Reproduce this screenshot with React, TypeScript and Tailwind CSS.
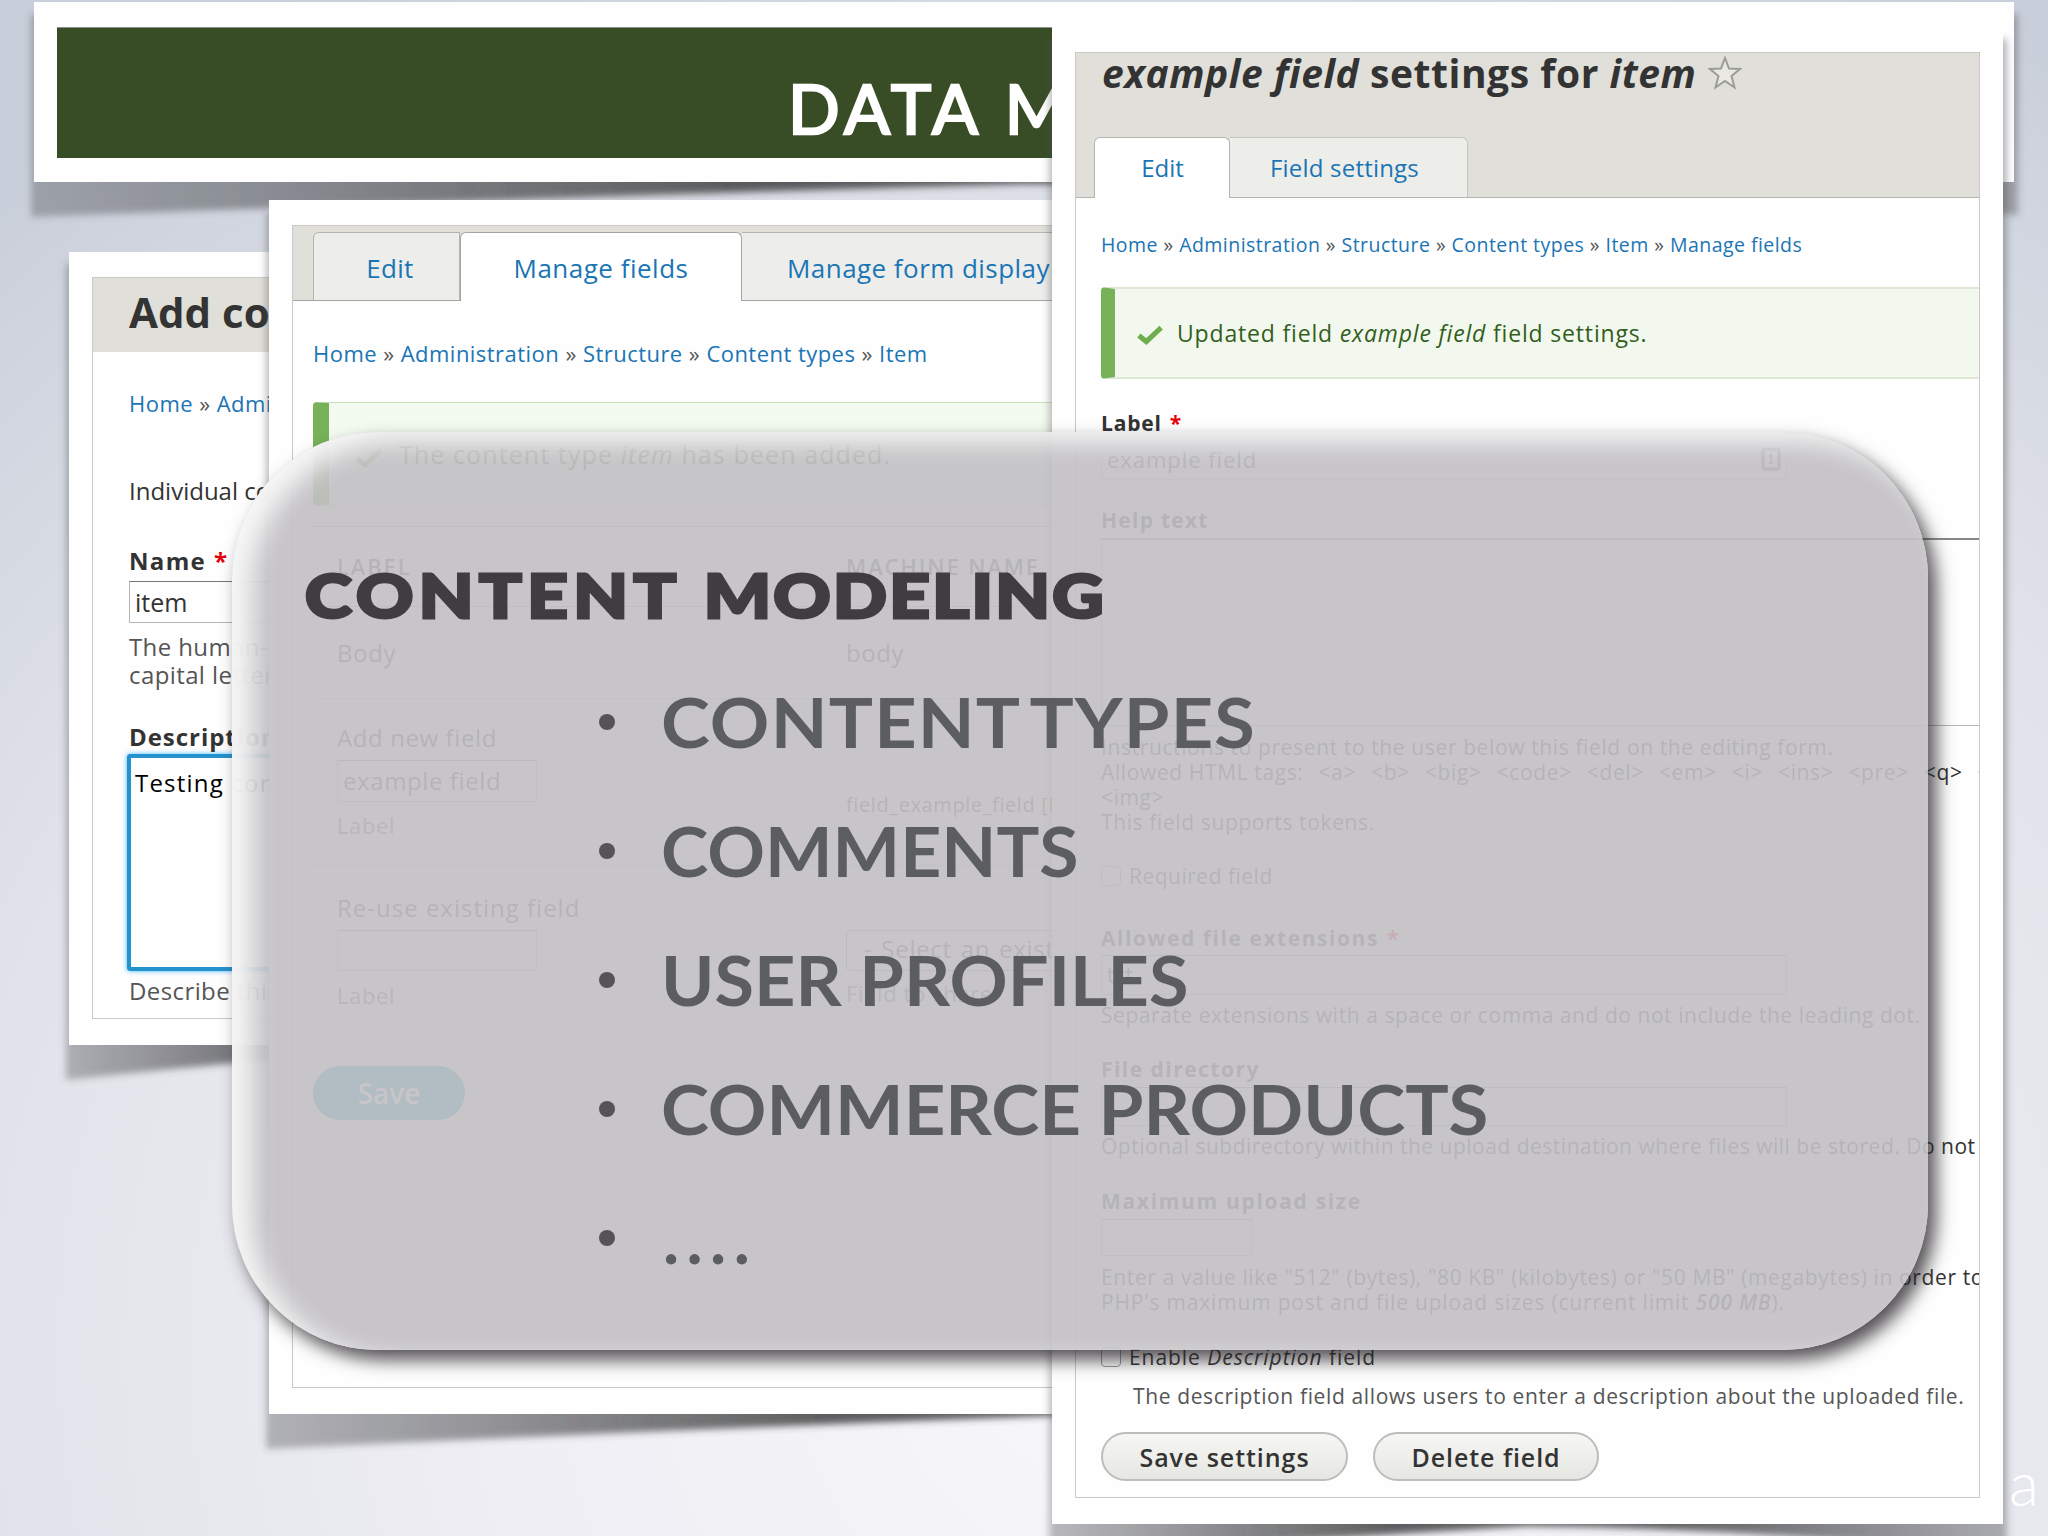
import { ReactNode } from "react";
import { clsx } from "clsx";

interface SheetProps {
    className?: string;
    width: number;
    height: number;
    children: ReactNode;
}

interface CrumbsProps {
    items: string[];
    className?: string;
}

// curled paper shadow that sits under every sheet
const CurlShadow = ({ width, height }: { width: number; height: number }) => {
    const id = `curl-${width}-${height}`;

    return (
        <svg
            className="absolute -left-5 -top-5 -z-10 overflow-visible"
            width={width + 40}
            height={height + 80}
        >
            <defs>
                <linearGradient id={id} x1="0" x2="1" y1="0" y2="0">
                    <stop offset="0" stopColor="#4a4c50" stopOpacity="0.36" />
                    <stop offset="0.35" stopColor="#3a3a3c" stopOpacity="0.8" />
                    <stop offset="0.65" stopColor="#3a3a3c" stopOpacity="0.8" />
                    <stop offset="1" stopColor="#4a4c50" stopOpacity="0.4" />
                </linearGradient>
                <filter id={`${id}-blur`} x="-5%" y="-5%" width="110%" height="115%">
                    <feGaussianBlur stdDeviation="3.5" />
                </filter>
            </defs>
            <path
                d={`M17 32 H${width + 24} V${height + 53} Q${width * 0.75 + 20} ${height + 24} ${width / 2 + 20} ${height + 22} Q${width * 0.25 + 20} ${height + 36} 17 ${height + 55} Z`}
                fill={`url(#${id})`}
                filter={`url(#${id}-blur)`}
            />
        </svg>
    );
};

const Sheet = ({ className, width, height, children }: SheetProps) => (
    <section className={clsx("absolute isolate", className)}>
        <CurlShadow width={width} height={height} />
        <div className="h-full w-full bg-[#fefefe] px-[23px] py-[25px]">{children}</div>
    </section>
);

const Crumbs = ({ items, className }: CrumbsProps) => (
    <nav className={clsx("whitespace-nowrap tracking-[0.46px] text-[#1a75b5]", className)}>
        {items.map((item, i) => (
            <span key={item}>
                {i > 0 && <span className="text-[#555]"> » </span>}
                {item}
            </span>
        ))}
    </nav>
);

const Check = ({ className }: { className: string }) => (
    <svg viewBox="0 0 28 20" className={className} fill="none" stroke="#6fae4f" strokeWidth="5.5">
        <path d="M2 10.5 L10 17 L26 2" />
    </svg>
);

const Required = () => <span className="ml-2 text-red-600">*</span>;

const AddTypeSheet = () => (
    <Sheet className="left-[69px] top-[252px] h-[793px] w-[700px]" width={700} height={793}>
        <div className="h-[742px] overflow-hidden whitespace-nowrap border border-[#c9c9c9] text-[24px] leading-[28px] text-[#333]">
            <header className="h-[74px] bg-[#e0dfd9] pl-9 pt-[13px]">
                <h2 className="text-[42px] font-bold leading-[42px]">Add content type</h2>
            </header>
            <div className="pl-9">
                <Crumbs className="mt-[37px] text-[22px]" items={["Home", "Administration"]} />
                <p className="mt-[60px]">Individual content</p>
                <p className="mt-[42px] font-bold tracking-[0.055em]">Name<Required /></p>
                <div className="mt-[6px] h-[42px] border border-[#b5b5b5] border-t-[#777] pl-[5px] text-[25px] leading-[40px]">item</div>
                <p className="mt-[10px] tracking-[0.4px] text-[#555]">The human-readable<br />capital letters</p>
                <p className="mt-[34px] font-bold tracking-[0.04em]">Description</p>
                <div className="-ml-[2px] mt-[3px] h-[217px] rounded-[3px] border-4 border-[#2492cc] pl-[4px] pt-[11px] tracking-[0.05em] text-black shadow-[0_0_5px_#40b6ff]">Testing content</div>
                <p className="mt-[6px] tracking-[0.4px] text-[#555]">Describe this</p>
            </div>
        </div>
    </Sheet>
);

const ManageFieldsSheet = () => (
    <Sheet className="left-[269px] top-[200px] h-[1214px] w-[1560px]" width={1560} height={1214}>
        <div className="h-[1163px] overflow-hidden whitespace-nowrap border border-[#c9c9c9] text-[24px] leading-[28px] text-[#333]">
            <header className="flex h-[75px] items-end border-b border-[#a6a6a0] bg-[#e0dfd9] pl-[20px] text-[26px] font-medium text-[#1a75b5]">
                <span className="flex h-[68px] w-[147px] items-center justify-center rounded-tl-md border border-b-0 border-[#b5b5b0] bg-[#ededeb] pl-[7px] pt-[2px] tracking-[0.3px]">Edit</span>
                <span className="-mb-px flex h-[69px] w-[282px] items-center justify-center rounded-t-md border border-b-0 border-[#a6a6a0] bg-white pt-[2px] tracking-[0.5px]">Manage fields</span>
                <span className="flex h-[68px] w-[360px] items-center border-t border-[#b5b5b0] bg-[#ededeb] pl-[45px] pt-[2px] tracking-[0.45px]">Manage form display</span>
            </header>
            <div className="pl-[20px]">
                <Crumbs className="mt-[38px] text-[22px]" items={["Home", "Administration", "Structure", "Content types", "Item"]} />
                <div className="mt-[35px] flex h-[104px] items-center rounded-l border-y border-l-[16px] border-y-[#c9dfb5] border-l-[#77b259] bg-[#f3faef] pl-[26px] text-[25px] tracking-[1.1px] text-[#325e1c]">
                    <Check className="mr-[16px] mt-2 h-5 w-7" />
                    <span>The content type <em>item</em> has been added.</span>
                </div>
                <div className="mt-[20px] grid grid-cols-[528px_1fr] tracking-[0.6px]">
                    <div className="col-span-2 grid h-[81px] grid-cols-subgrid border-y border-[#aaa] pl-[24px] pt-[25px] text-[22px] font-semibold tracking-[0.085em]">
                        <span>LABEL</span>
                        <span className="pl-[5px]">MACHINE NAME</span>
                    </div>
                    <div className="col-span-2 grid h-[92px] grid-cols-subgrid items-center border-b border-[#ccc] pl-[24px]">
                        <span>Body</span>
                        <span className="pl-[5px]">body</span>
                    </div>
                    <div className="col-span-2 grid h-[167px] grid-cols-subgrid border-b border-[#ccc] pl-[24px] pt-[25px]">
                        <div>
                            <p>Add new field</p>
                            <div className="mt-[8px] h-[42px] w-[200px] border border-[#bbb] border-t-[#777] pl-[5px] leading-[40px]">example field</div>
                            <p className="mt-[9px] text-[22px] text-[#555]">Label</p>
                        </div>
                        <p className="pl-[5px] pt-[67px] text-[20px]">field_example_field [Edit]</p>
                    </div>
                    <div className="col-span-2 grid grid-cols-subgrid pl-[24px] pt-[28px]">
                        <div>
                            <p className="tracking-[1px]">Re-use existing field</p>
                            <div className="mt-[8px] h-[41px] w-[200px] border border-[#bbb] border-t-[#777]" />
                            <p className="mt-[10px] text-[22px] text-[#555]">Label</p>
                        </div>
                        <div className="pl-[5px] pt-[36px]">
                            <div className="h-[41px] w-[400px] rounded border border-[#888] pl-[17px] leading-[36px] tracking-[0.7px] [word-spacing:2px]">- Select an existing field -</div>
                            <p className="mt-[8px] text-[22px] text-[#555]">Field to share</p>
                        </div>
                    </div>
                </div>
                <div className="mt-[57px] flex h-[54px] w-[152px] items-center justify-center rounded-full bg-[#0695c8] text-[28px] font-semibold text-white">Save</div>
            </div>
        </div>
    </Sheet>
);

const FieldSettingsSheet = () => (
    <Sheet className="left-[1052px] top-[27px] h-[1497px] w-[951px]" width={951} height={1497}>
        <div className="h-[1446px] overflow-hidden whitespace-nowrap border border-[#c9c9c9] text-[21px] leading-[24px] text-[#333]">
            <header className="flex h-[145px] flex-col justify-between border-b border-[#b5b5b0] bg-[#e0dfd9]">
                <h2 className="flex items-center pl-[26px] text-[39px] font-bold leading-[40px] tracking-[0.55px]">
                    <span><em>example field</em> settings for <em>item</em></span>
                    <svg viewBox="0 0 34 34" className="ml-3 h-[34px] w-[34px]" fill="#e9e8e4" stroke="#9b9b98" strokeWidth="2">
                        <path d="M17 2 L21 12.5 L32 13 L23.500 20 L26.500 31.500 L17 25 L7.500 31.500 L10.500 20 L2 13 L13 12.500 Z" />
                    </svg>
                </h2>
                <div className="-mb-px flex items-end pl-[18px] text-[24px] font-medium text-[#1a75b5]">
                    <span className="flex h-[61px] w-[136px] items-center justify-center rounded-t-md border border-b-0 border-[#b5b5b0] bg-white pl-px">Edit</span>
                    <span className="mb-px flex h-[60px] w-[238px] items-center rounded-tr-md border border-b-0 border-l-0 border-[#c5c5c0] bg-[#ededea] pl-[40px] pt-px tracking-[0.2px]">Field settings</span>
                </div>
            </header>
            <div className="pl-[25px]">
                <Crumbs
                    className="mt-[35px] text-[19.5px]"
                    items={["Home", "Administration", "Structure", "Content types", "Item", "Manage fields"]}
                />
                <div className="mt-[30px] flex h-[92px] items-center rounded-l border-y-2 border-l-[14px] border-y-[#dfe6d5] border-l-[#77b259] bg-[#f3f8ee] pl-[22px] text-[23px] tracking-[0.83px] text-[#325e1c]">
                    <Check className="mr-[14px] mt-1 h-5 w-[26px]" />
                    <span>Updated field <em>example field</em> field settings.</span>
                </div>
                <p className="mt-[32px] font-bold tracking-[0.04em]">Label<Required /></p>
                <div className="mt-[3px] flex h-[42px] w-[686px] items-center justify-between border border-[#ccc] pl-[5px] pr-[5px] text-[22px] tracking-[0.95px]">
                    <span>example field</span>
                    <svg viewBox="0 0 20 24" className="h-6 w-5" fill="none" stroke="#666" strokeWidth="3">
                        <rect x="2" y="2" width="16" height="20" rx="2" />
                        <path d="M10 7 V16 M8 16 H12 M8 9 H10" strokeWidth="2" />
                    </svg>
                </div>
                <p className="mt-[28px] font-bold tracking-[0.06em]">Help text</p>
                <div className="mt-[6px] h-[188px] w-[960px] border border-[#b5b5b5] border-t-2 border-t-[#888]" />
                <div className="mt-[9px] text-[21px] leading-[25px] tracking-[0.62px]">
                    <p>Instructions to present to the user below this field on the editing form.</p>
                    <p>
                        Allowed HTML tags:
                        <span className="[word-spacing:9px]">{" <a> <b> <big> <code> <del> <em> <i> <ins> <pre> <q> <small>"}</span>
                    </p>
                    <p>{"<img>"}</p>
                    <p>This field supports tokens.</p>
                </div>
                <p className="mt-[29px] flex items-center gap-2 tracking-[0.5px]">
                    <span className="h-5 w-5 rounded border border-[#999] bg-white" />
                    Required field
                </p>
                <p className="mt-[38px] font-bold tracking-[0.074em]">Allowed file extensions<Required /></p>
                <div className="mt-[5px] h-[40px] w-[686px] border border-[#bbb] border-t-[#888] pl-[5px] leading-[38px]">txt</div>
                <p className="mt-[8px] leading-[25px] tracking-[0.55px]">Separate extensions with a space or comma and do not include the leading dot.</p>
                <p className="mt-[29px] font-bold tracking-[0.07em]">File directory</p>
                <div className="mt-[6px] h-[39px] w-[686px] border border-[#bbb] border-t-[#888]" />
                <p className="mt-[8px] leading-[25px] tracking-[0.5px]">Optional subdirectory within the upload destination where files will be stored. Do not include</p>
                <p className="mt-[30px] font-bold tracking-[0.08em]">Maximum upload size</p>
                <div className="mt-[6px] h-[37px] w-[151px] border border-[#bbb] border-t-[#888]" />
                <div className="mt-[9px] leading-[25px] tracking-[0.63px]">
                    <p>Enter a value like "512" (bytes), "80 KB" (kilobytes) or "50 MB" (megabytes) in order to restrict</p>
                    <p className="tracking-[0.8px]">PHP's maximum post and file upload sizes (current limit <em className="font-semibold">500 MB</em>).</p>
                </div>
                <p className="mt-[30px] flex items-center gap-2 tracking-[0.95px]">
                    <span className="h-5 w-5 rounded border border-[#999] bg-white" />
                    <span>Enable <em>Description</em> field</span>
                </p>
                <p className="ml-[32px] mt-[15px] leading-[25px] tracking-[0.63px] text-[#555]">The description field allows users to enter a description about the uploaded file.</p>
                <div className="mt-[23px] flex gap-[25px] text-[25px] font-semibold tracking-[0.95px]">
                    <span className="flex h-[49px] w-[247px] items-center justify-center rounded-full border-2 border-[#bdbdba] bg-linear-to-b from-[#f6f6f4] to-[#e6e6e2]">Save settings</span>
                    <span className="flex h-[49px] w-[226px] items-center justify-center rounded-full border-2 border-[#bdbdba] bg-linear-to-b from-[#f6f6f4] to-[#e6e6e2]">Delete field</span>
                </div>
            </div>
        </div>
    </Sheet>
);

const topics = [
    { label: "CONTENT TYPES", className: "scale-x-[1.085] tracking-[1.1px] [word-spacing:-6px]" },
    { label: "COMMENTS", className: "scale-x-[1.052]" },
    { label: "USER PROFILES", className: "scale-x-[1.06]" },
    { label: "COMMERCE PRODUCTS", className: "scale-x-[1.067]" },
    { label: "....", className: "pl-[2px] tracking-[7.4px]" },
];

const App = () => {
    return (
        <main className="relative h-[1536px] w-[2048px] overflow-hidden bg-[#dfe1e8] bg-[radial-gradient(ellipse_1300px_1200px_at_55%_88%,#f8f7fa_0%,#eeeef4_50%,#e1e3ea_90%,#c9cfda_130%)] font-['Open_Sans',sans-serif]">
            <Sheet className="left-[34px] top-[2px] h-[180px] w-[1980px]" width={1980} height={180}>
                <div className="h-[131px] w-[1934px] border-t border-[#8a8f88] bg-[#384d25] pl-[731px] pt-[38px] font-['Lato',sans-serif] text-[68px] leading-[84px] tracking-[5.7px] text-white [-webkit-text-stroke:2.5px_white]">
                    DATA M
                </div>
            </Sheet>
            <AddTypeSheet />
            <ManageFieldsSheet />
            <FieldSettingsSheet />
            <span className="absolute left-[2009px] top-[1438px] font-['Lato',sans-serif] text-[62px] font-light leading-[88px] text-white">a</span>

            <section className="absolute left-[232px] top-[432px] h-[918px] w-[1696px] rounded-[146px] bg-[rgba(194,192,195,0.915)] pl-[73px] pt-[124px] font-['Lato',sans-serif] shadow-[8px_10px_18px_0_rgba(40,36,40,0.8),inset_20px_10px_24px_0_rgba(252,252,252,0.9)]">
                <h1 className="flex w-fit origin-left scale-x-[1.16] gap-[19px] text-[61px] font-black leading-[78px] text-[#403d40] [-webkit-text-stroke:3px_#403d40]">
                    <span className="tracking-[0.077em]">CONTENT</span>
                    <span className="tracking-[0.033em]">MODELING</span>
                </h1>
                <ul className="mt-[23px] pl-[294px] text-[68px] font-bold text-[#5b5d5e]">
                    {topics.map((topic) => (
                        <li key={topic.label} className="flex h-[129px] items-center">
                            <span className="mr-[46px] h-4 w-4 rounded-full bg-[#555356]" />
                            <span className={clsx("origin-left", topic.className)}>{topic.label}</span>
                        </li>
                    ))}
                </ul>
            </section>
        </main>
    );
};

export default App;
